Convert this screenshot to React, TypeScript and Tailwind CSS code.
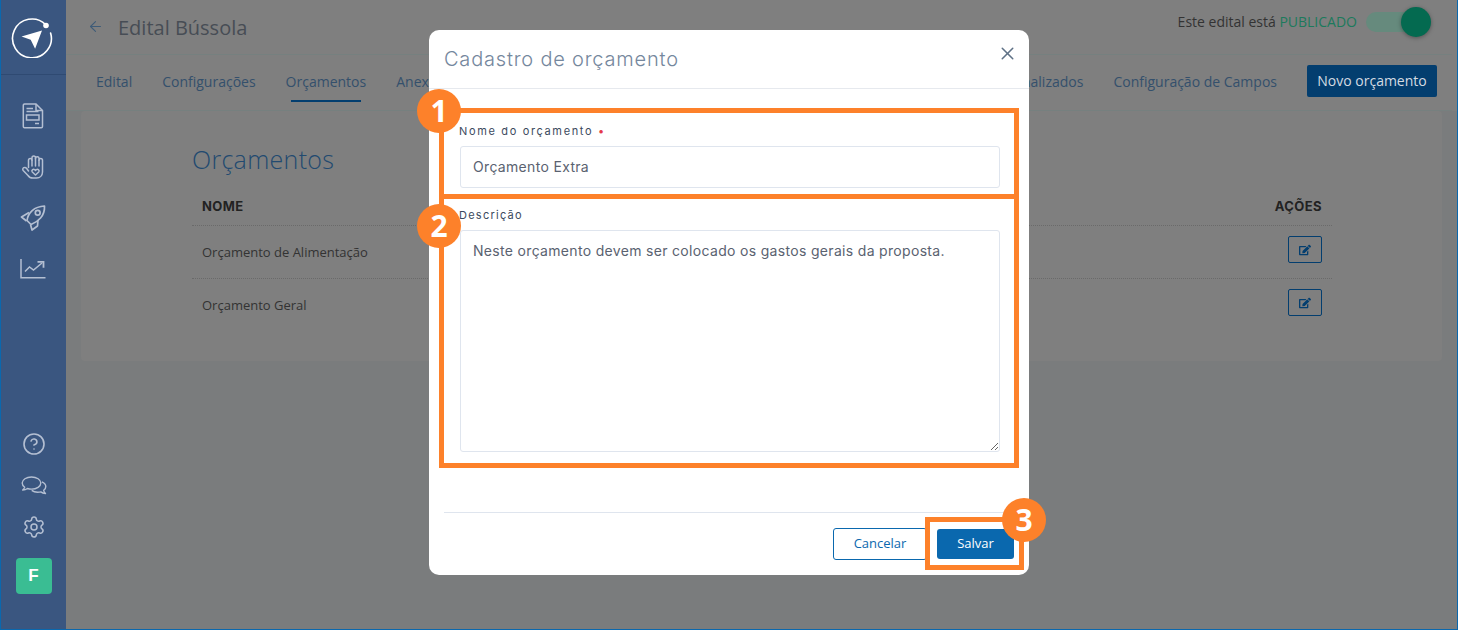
import React from 'react';
import { ArrowLeft, CircleHelp, Settings, X } from 'lucide-react';
import { FaEdit } from 'react-icons/fa';

const openSans = { fontFamily: '"Open Sans", sans-serif' };
const inter = { fontFamily: 'Inter, sans-serif' };

const LogoIcon = () => (
  <svg width="42" height="42" viewBox="0 0 42 42" fill="none">
    <path d="M34.6 8.6A19.4 19.4 0 1 0 39.6 17" stroke="#fff" strokeWidth="1.6" strokeLinecap="round" />
    <circle cx="35" cy="9.500" r="2.800" fill="#fff" />
    <path d="M31 14.500 10.500 20.500l9.200 3.200 4.400 9z" fill="#fff" />
  </svg>
);

const DocIcon = () => (
  <svg width="22" height="26" viewBox="0 0 22 26" fill="none" stroke="#b4bfd2" strokeWidth="1.5">
    <path d="M2.500 1h11.500l6.500 6.500V23.500a1.200 1.200 0 0 1-1.200 1.200H2.500a1.200 1.200 0 0 1-1.200-1.200V2.200A1.200 1.200 0 0 1 2.500 1z" />
    <path d="M14 1v6.500h6.500M4.500 5.500h6.500M4.500 8.500h12M17 20.500h-4" />
    <rect x="4.500" y="12" width="12.500" height="5" />
  </svg>
);

const HandIcon = () => (
  <svg width="22" height="26" viewBox="0 0 22 24" fill="none" stroke="#b4bfd2" strokeWidth="1.5" strokeLinecap="round" strokeLinejoin="round">
    <path d="M6.500 12.500V5.250a1.750 1.750 0 0 1 3.500 0V2.750a1.750 1.750 0 0 1 3.500 0v.75a1.750 1.750 0 0 1 3.500 0V5.250a1.750 1.750 0 0 1 3.500 0V17c0 3.500-2.500 6-6 6h-3.500c-2.500 0-4-1-5-2.500L1.200 15.500c-.8-1.200-.4-2.300.6-2.800 1-.5 2-.2 2.700.6L6.500 16" />
    <path d="M10 5.250V11M13.500 3.500V11M17 5.250V11" />
    <path d="M13.500 20l-3.200-3c-1.300-1.500.9-3.500 2.400-2.200l.8.7.8-.7c1.500-1.300 3.700.7 2.400 2.200z" />
  </svg>
);

const RocketIcon = () => (
  <svg width="26" height="26" viewBox="0 0 26 26" fill="none" stroke="#b4bfd2" strokeWidth="1.7" strokeLinejoin="round">
    <path d="M7 15.500C8 8 14 1.500 24.500 1 25 11 18 17 11 19.500z" />
    <circle cx="17.700" cy="7.800" r="2.400" />
    <path d="M9 7.500 1.500 12l5 4M18 15l-.5 6-5.500 4-1.500-5.500" />
  </svg>
);

const ChartIcon = () => (
  <svg width="26" height="20" viewBox="0 0 26 20" fill="none" stroke="#b4bfd2" strokeWidth="1.5">
    <path d="M1 0v18.800h24.500" />
    <path d="M5 12.500 9.500 8l4 3L22 4" />
    <path d="M17.500 2.800h6v6" strokeWidth="1.8" />
  </svg>
);

const ChatIcon = () => (
  <svg width="26" height="20" viewBox="0 0 26 20" fill="none" stroke="#b4bfd2" strokeWidth="1.4" strokeLinejoin="round">
    <path d="M10.500 1C5.300 1 1.200 3.700 1.200 7c0 1.700 1 3.100 2.500 4.200-.2 1-.9 1.900-2 2.800 2 0 3.600-.6 4.800-1.500 1.200.4 2.600.6 4 .6 5.200 0 9.300-2.700 9.300-6.100S15.700 1 10.500 1z" />
    <path d="M20.800 5.800c2.500 1 4 2.800 4 4.800 0 1.500-.8 2.800-2.100 3.800.2 1.200.8 2.200 1.800 3.200-1.800-.1-3.500-.7-4.700-1.700-1 .3-2.100.4-3.200.4-2.400 0-4.400-.7-5.900-1.900" />
  </svg>
);

const EditButton = () => (
  <div className="-mt-[5px] flex h-[27px] w-[34px] items-center justify-center rounded-[2px] border border-[#033e6f] text-[#033e6f]">
    <FaEdit size={12} />
  </div>
);

const Sidebar = () => (
  <aside className="flex h-full w-[65px] shrink-0 flex-col items-center bg-[#3a5680]">
    <div className="flex h-[75px] w-full items-center justify-center border-b border-[#2f4a72] pr-[3px]">
      <LogoIcon />
    </div>
    <div className="mt-[28px] flex flex-col items-center gap-[25px] pr-[1px]">
      <DocIcon />
      <HandIcon />
      <RocketIcon />
      <div className="mt-[3px]">
        <ChartIcon />
      </div>
    </div>
    <div className="mt-auto mb-[35px] flex flex-col items-center">
      <CircleHelp size={24} color="#b4bfd2" strokeWidth={1.6} />
      <div className="mt-[20px]">
        <ChatIcon />
      </div>
      <div className="mt-[19px]">
        <Settings size={24} color="#b4bfd2" strokeWidth={1.5} />
      </div>
      <div className="mt-[19px] flex h-9 w-9 items-center justify-center rounded-[4px] bg-[#3abd93] text-[17px] font-bold text-white" style={{ fontFamily: '"Liberation Sans", sans-serif' }}>
        F
      </div>
    </div>
  </aside>
);

const Tab = ({ label, active }: { label: string; active?: boolean }) => (
  <div className="relative flex h-full items-center whitespace-nowrap pb-[2px] text-[14px] text-[#34506c]">
    {label}
    {active && <div className="absolute bottom-[8px] left-[5px] right-[5px] h-[2px] bg-[#033e6f]" />}
  </div>
);

const Row = ({ name }: { name: string }) => (
  <div className="flex h-[53px] items-center justify-between border-b border-dotted border-[#6a6a6a] px-[10px] text-[13px] text-[#333333] last:border-transparent">
    <span className="mt-[1px]">{name}</span>
    <EditButton />
  </div>
);

const Annotation = ({ n, className }: { n: number; className: string }) => (
  <div className={`absolute flex h-11 w-11 items-center justify-center rounded-full bg-[#fd812a] text-[30px] font-bold leading-none text-white ${className}`}>
    {n}
  </div>
);

const App: React.FC = () => {
  return (
    <div className="relative flex h-[630px] w-[1458px] overflow-hidden border-x border-b border-[#0a68ae] bg-[#7a7c7d]" style={openSans}>
      <Sidebar />

      <main className="flex min-w-0 flex-1 flex-col">
        <div className="bg-[#7f7f7f] pr-[5px]">
          <header className="flex h-[55px] items-start justify-between border-b border-[#76807f] pl-[21px] pr-[32px]">
            <div className="flex items-center gap-[14px] pt-[14px]">
              <ArrowLeft size={17} color="#3f5c78" strokeWidth={1.5} className="-mt-[2px]" />
              <h1 className="text-[20px] leading-[27px] text-[#474d55]">Edital Bússola</h1>
            </div>
            <div className="flex items-center gap-[9px] pt-[12px]">
              <span className="-mt-[1px] text-[14px] leading-[19px] text-[#333333]">
                Este edital está <span className="text-[#1c7a5c]">PUBLICADO</span>
              </span>
              <div className="relative h-5 w-[54px] rounded-full bg-[#668a7d]">
                <div className="absolute -top-[5px] -right-[11px] h-[30px] w-[30px] rounded-full bg-[#046a50] shadow-[0_1px_4px_rgba(0,0,0,0.35)]" />
              </div>
            </div>
          </header>

          <nav className="flex h-[56px] items-center border-b border-[#76807f] pl-[30px] pr-[15px]">
            <div className="flex h-full gap-[30px]">
              <Tab label="Edital" />
              <Tab label="Configurações" />
              <Tab label="Orçamentos" active />
              <Tab label="Anexos" />
            </div>
            <div className="ml-auto flex h-full items-center gap-[30px]">
              <Tab label="Campos Personalizados" />
              <Tab label="Configuração de Campos" />
              <button className="-mt-[4px] h-8 w-[130px] rounded-[2px] bg-[#033e6f] text-[14px] text-[#d4dbe2]">Novo orçamento</button>
            </div>
          </nav>
        </div>

        <div className="flex-1 px-[15px]">
          <section className="h-[250px] rounded-[4px] bg-[#7f7f7f] pl-[111px] pr-[110px] pt-[31px]">
            <h2 className="text-[25px] font-light leading-[35px] tracking-[0.3px] text-[#224a70]">Orçamentos</h2>
            <div className="mt-[16px] flex h-[33px] items-center justify-between border-b border-dotted border-[#6a6a6a] px-[10px] pb-[4px] text-[13px] font-bold tracking-[0.4px] text-[#222222]" style={inter}>
              <span>NOME</span>
              <span>AÇÕES</span>
            </div>
            <Row name="Orçamento de Alimentação" />
            <Row name="Orçamento Geral" />
          </section>
        </div>
      </main>

      {/* modal */}
      <div className="absolute inset-0 flex justify-center pt-[30px]">
        <div className="flex h-[545px] w-[600px] flex-col rounded-[10px] bg-white">
          <div className="flex h-[59px] items-center justify-between border-b border-[#e6e9ee] pl-[15px] pr-[11px]">
            <h3 className="text-[20px] font-light tracking-[0.8px] text-[#75879d]" style={inter}>Cadastro de orçamento</h3>
            <X size={21} color="#5f7186" strokeWidth={1.75} className="-mt-[12px]" />
          </div>

          <div className="flex-1 pl-[30px] pr-[29px] pt-[35px]">
            <label className="block text-[11px] leading-[14px] tracking-[1.65px] text-[#3b4a5e]" style={inter}>
              Nome do orçamento <span className="text-[#e5394a]">•</span>
            </label>
            <input
              readOnly
              value="Orçamento Extra"
              className="mt-[8px] ml-[1px] block h-[42px] w-[540px] rounded-[3px] border border-[#dfe5ee] px-3 pb-[2px] text-[14px] tracking-[0.32px] text-[#5a6270] outline-none"
              style={inter}
            />
            <label className="mt-[20px] block text-[11px] leading-[14px] tracking-[1.25px] text-[#3b4a5e]" style={inter}>
              Descrição
            </label>
            <textarea
              readOnly
              value="Neste orçamento devem ser colocado os gastos gerais da proposta."
              className="mt-[8px] ml-[1px] block h-[222px] w-[540px] rounded-[3px] border border-[#dfe5ee] px-3 py-[10px] text-[14px] leading-[20px] tracking-[0.32px] text-[#5a6270] outline-none"
              style={inter}
            />
          </div>

          <div className="mx-[15px] flex h-[63px] items-start justify-end gap-[10px] border-t border-[#dfe5ee] pt-[15px]">
            <button className="h-8 w-[94px] rounded-[3px] border border-[#0a68ae] text-[13px] text-[#0a68ae]">Cancelar</button>
            <button className="mt-px h-[30px] w-[77px] rounded-[3px] bg-[#0a68ae] text-[13px] text-white">Salvar</button>
          </div>
        </div>
      </div>

      {/* orange callouts */}
      <div className="absolute left-[438px] top-[108px] h-[91px] w-[580px] border-[5px] border-[#fd812a]" />
      <div className="absolute left-[438px] top-[194px] h-[274px] w-[580px] border-[5px] border-[#fd812a]" />
      <div className="absolute left-[924px] top-[517px] h-[53px] w-[99px] border-[5px] border-[#fd812a]" />
      <Annotation n={1} className="left-[416px] top-[89px]" />
      <Annotation n={2} className="left-[416px] top-[204px]" />
      <Annotation n={3} className="left-[1001px] top-[498px]" />
    </div>
  );
};

export default App;
